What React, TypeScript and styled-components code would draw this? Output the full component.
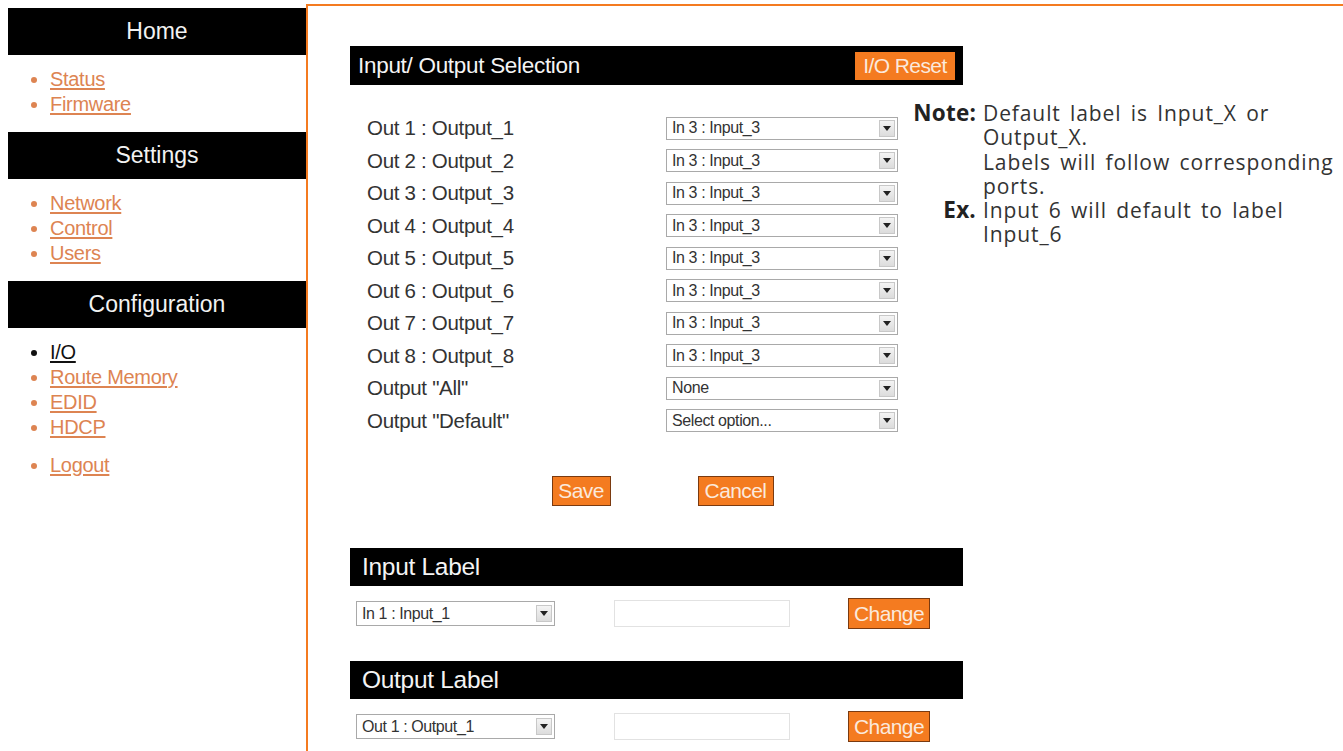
import React, { FC } from 'react'
import styled, { createGlobalStyle } from 'styled-components'

const GlobalStyle = createGlobalStyle`
  html, body {
    margin: 0;
    padding: 0;
    background: #ffffff;
  }
  body {
    font-family: "Liberation Sans", Arial, sans-serif;
    color: #333;
  }
`;

const ORANGE = '#f47b20';
const LINK = '#dd8452';

type navItem = { label: string, active?: boolean, spaced?: boolean };

const navGroups: { title: string, items: navItem[] }[] = [
    { title: 'Home', items: [{ label: 'Status' }, { label: 'Firmware' }] },
    { title: 'Settings', items: [{ label: 'Network' }, { label: 'Control' }, { label: 'Users' }] },
    {
        title: 'Configuration',
        items: [
            { label: 'I/O', active: true },
            { label: 'Route Memory' },
            { label: 'EDID' },
            { label: 'HDCP' },
            { label: 'Logout', spaced: true },
        ],
    },
];

const outputs = [1, 2, 3, 4, 5, 6, 7, 8].map((n) => ({
    label: `Out ${n} : Output_${n}`,
    value: 'In 3 : Input_3',
}));

const noteLines = ['Default label is Input_X or', 'Output_X.', 'Labels will follow corresponding', 'ports.'];
const exampleLines = ['Input 6 will default to label', 'Input_6'];

const FakeSelect: FC<{ value: string, width: number, height: number, size?: number }> = ({ value, width, height, size }) => {
    return <SelectBox $w={width} $h={height}>
        <SelectText $size={size}>{value}</SelectText>
        <SelectArrow>
            <svg width="8" height="5" viewBox="0 0 8 5"><path d="M0 0h8L4 5z" fill="#222" /></svg>
        </SelectArrow>
    </SelectBox>
}

const LabelEditor: FC<{ title: string, value: string }> = ({ title, value }) => {
    return <LabelSection>
        <BarHeader $size={24.5} $h={38} $pad={12}>{title}</BarHeader>
        <LabelRow>
            <FakeSelect value={value} width={199} height={25} size={16} />
            <TextField />
            <OrangeButton $w={82} $h={31}>Change</OrangeButton>
        </LabelRow>
    </LabelSection>
}

export default function App() {
    return <>
        <GlobalStyle />
        <Page>
            <Sidebar>
                {navGroups.map((g) => (
                    <NavGroup key={g.title}>
                        <NavHeader>{g.title}</NavHeader>
                        <NavList>
                            {g.items.map((it) => (
                                <NavItem key={it.label} $active={it.active} $spaced={it.spaced}>
                                    <a href="#">{it.label}</a>
                                </NavItem>
                            ))}
                        </NavList>
                    </NavGroup>
                ))}
            </Sidebar>

            <Main>
                <Form>
                    <BarHeader $size={22.5} $h={39} $pad={8}>
                        Input/ Output Selection
                        <OrangeButton $w={100} $h={28}>I/O Reset</OrangeButton>
                    </BarHeader>

                    <Rows>
                        {outputs.map((o) => (
                            <Row key={o.label}>
                                <RowLabel>{o.label}</RowLabel>
                                <FakeSelect value={o.value} width={232} height={23} />
                            </Row>
                        ))}
                        <Row>
                            <RowLabel>Output "All"</RowLabel>
                            <FakeSelect value="None" width={232} height={23} />
                        </Row>
                        <Row>
                            <RowLabel>Output "Default"</RowLabel>
                            <FakeSelect value="Select option..." width={232} height={23} />
                        </Row>
                    </Rows>

                    <Actions>
                        <OrangeButton $w={59} $h={30}>Save</OrangeButton>
                        <OrangeButton $w={76} $h={30}>Cancel</OrangeButton>
                    </Actions>

                    <LabelEditor title="Input Label" value="In 1 : Input_1" />
                    <LabelEditor title="Output Label" value="Out 1 : Output_1" />
                </Form>

                <Note>
                    <NoteKey>Note:</NoteKey>
                    <NoteText>
                        {noteLines.map((l) => <NoteLine key={l}>{l}</NoteLine>)}
                    </NoteText>
                    <NoteKey>Ex.</NoteKey>
                    <NoteText>
                        {exampleLines.map((l) => <NoteLine key={l}>{l}</NoteLine>)}
                    </NoteText>
                </Note>
            </Main>
        </Page>
    </>
}

const Page = styled.div`
display:flex;
align-items:flex-start;
padding-top:4px;
height:747px;
overflow:hidden;
`;

const Sidebar = styled.nav`
flex:0 0 298px;
margin:4px 0 0 8px;
`;

const NavGroup = styled.div`
margin-bottom:1px;
`;

const NavHeader = styled.div`
height:47px;
background:#000;
color:#f2f2f2;
font-size:23px;
display:flex;
align-items:center;
justify-content:center;
`;

const NavList = styled.ul`
margin:0;
padding:12px 0 14px 42px;
list-style:disc;
color:${LINK};
`;

const NavItem = styled.li<{ $active?: boolean, $spaced?: boolean }>`
font-size:20px;
line-height:25px;
letter-spacing:-0.3px;
margin-top:${p => p.$spaced ? '13px' : '0'};
color:${p => p.$active ? '#111' : LINK};
a{
    color:inherit;
    text-decoration:underline;
    text-underline-offset:2px;
}
`;

const Main = styled.main`
position:relative;
flex:1;
height:100%;
border-top:2px solid ${ORANGE};
border-left:2px solid ${ORANGE};
padding:40px 0 0 42px;
box-sizing:border-box;
`;

const Form = styled.div`
width:613px;
`;

const BarHeader = styled.div<{ $size: number, $h: number, $pad: number }>`
height:${p => p.$h}px;
background:#000;
color:#f4f4f4;
font-size:${p => p.$size}px;
letter-spacing:-0.3px;
display:flex;
align-items:center;
justify-content:space-between;
padding:0 8px 0 ${p => p.$pad}px;
box-sizing:border-box;
`;

const OrangeButton = styled.button<{ $w: number, $h: number }>`
width:${p => p.$w}px;
height:${p => p.$h}px;
flex:none;
padding:0;
background:${ORANGE};
color:#fbe9dc;
border:1px solid #7a3a10;
font-family:"Liberation Sans", Arial, sans-serif;
font-size:21px;
letter-spacing:-0.6px;
cursor:pointer;
${BarHeader} &{
    border-color:${ORANGE};
}
`;

const Rows = styled.div`
padding:27px 0 0 17px;
display:grid;
grid-auto-rows:32.5px;
`;

const Row = styled.div`
display:grid;
grid-template-columns:299px 232px;
align-items:center;
`;

const RowLabel = styled.span`
font-size:20.5px;
color:#333;
letter-spacing:-0.3px;
`;

const SelectBox = styled.div<{ $w: number, $h: number }>`
width:${p => p.$w}px;
height:${p => p.$h}px;
flex:none;
box-sizing:border-box;
border:1px solid #a9a9a9;
background:#fff;
display:flex;
align-items:center;
justify-content:space-between;
padding:0 2px 0 5px;
`;

const SelectText = styled.span<{ $size?: number }>`
font-size:${p => p.$size ?? 16}px;
color:#333;
letter-spacing:-0.4px;
white-space:nowrap;
`;

const SelectArrow = styled.span`
width:16px;
height:17px;
box-sizing:border-box;
border:1px solid #c8c8c8;
background:linear-gradient(#f4f4f4, #dcdcdc);
display:flex;
align-items:center;
justify-content:center;
`;

const Actions = styled.div`
display:flex;
justify-content:center;
gap:87px;
padding:39px 0 0 12px;
`;

const LabelSection = styled.section`
margin-top:42px;
& + &{
    margin-top:32px;
}
`;

const LabelRow = styled.div`
display:flex;
align-items:center;
padding:12px 0 0 6px;
`;

const TextField = styled.div`
width:176px;
height:27px;
margin:0 58px 0 59px;
border:1px solid #e2e2e2;
box-sizing:border-box;
background:#fff;
`;

const Note = styled.aside`
position:absolute;
left:602px;
top:95px;
display:grid;
grid-template-columns:66px auto;
column-gap:7px;
font-family:"Open Sans", "Noto Sans", sans-serif;
font-size:21px;
letter-spacing:0.9px;
word-spacing:3px;
line-height:24.3px;
color:#333;
`;

const NoteKey = styled.span`
font-size:22.5px;
font-weight:700;
text-align:right;
color:#222;
letter-spacing:0.2px;
white-space:nowrap;
`;

const NoteText = styled.span`
display:flex;
flex-direction:column;
white-space:nowrap;
`;

const NoteLine = styled.span`
height:24.3px;
`;
